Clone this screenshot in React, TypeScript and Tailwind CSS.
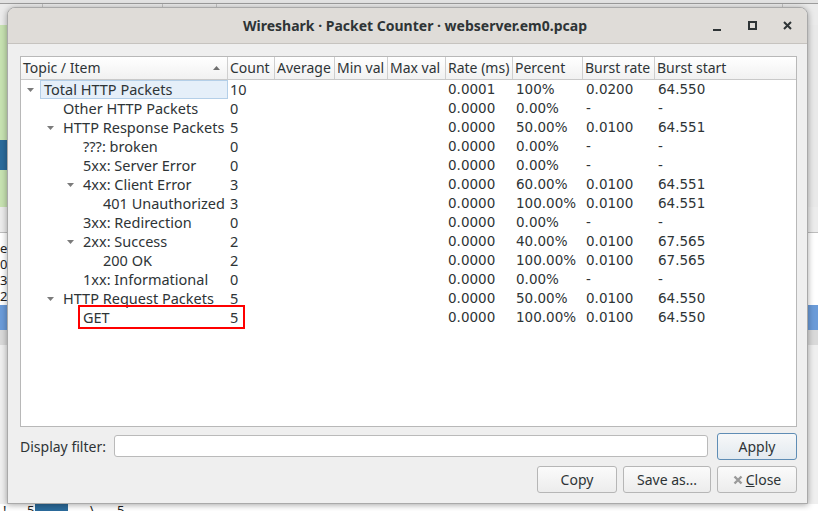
import React from 'react';

type Row = {
  label: string;
  level: number;
  expanded?: boolean;
  count: string;
  rate: string;
  percent: string;
  burstRate: string;
  burstStart: string;
};

const rows: Row[] = [
  { label: 'Total HTTP Packets', level: 0, expanded: true, count: '10', rate: '0.0001', percent: '100%', burstRate: '0.0200', burstStart: '64.550' },
  { label: 'Other HTTP Packets', level: 1, count: '0', rate: '0.0000', percent: '0.00%', burstRate: '-', burstStart: '-' },
  { label: 'HTTP Response Packets', level: 1, expanded: true, count: '5', rate: '0.0000', percent: '50.00%', burstRate: '0.0100', burstStart: '64.551' },
  { label: '???: broken', level: 2, count: '0', rate: '0.0000', percent: '0.00%', burstRate: '-', burstStart: '-' },
  { label: '5xx: Server Error', level: 2, count: '0', rate: '0.0000', percent: '0.00%', burstRate: '-', burstStart: '-' },
  { label: '4xx: Client Error', level: 2, expanded: true, count: '3', rate: '0.0000', percent: '60.00%', burstRate: '0.0100', burstStart: '64.551' },
  { label: '401 Unauthorized', level: 3, count: '3', rate: '0.0000', percent: '100.00%', burstRate: '0.0100', burstStart: '64.551' },
  { label: '3xx: Redirection', level: 2, count: '0', rate: '0.0000', percent: '0.00%', burstRate: '-', burstStart: '-' },
  { label: '2xx: Success', level: 2, expanded: true, count: '2', rate: '0.0000', percent: '40.00%', burstRate: '0.0100', burstStart: '67.565' },
  { label: '200 OK', level: 3, count: '2', rate: '0.0000', percent: '100.00%', burstRate: '0.0100', burstStart: '67.565' },
  { label: '1xx: Informational', level: 2, count: '0', rate: '0.0000', percent: '0.00%', burstRate: '-', burstStart: '-' },
  { label: 'HTTP Request Packets', level: 1, expanded: true, count: '5', rate: '0.0000', percent: '50.00%', burstRate: '0.0100', burstStart: '64.550' },
  { label: 'GET', level: 2, count: '5', rate: '0.0000', percent: '100.00%', burstRate: '0.0100', burstStart: '64.550' },
];

const cols = 'grid grid-cols-[207px_47px_60px_53px_58px_67px_70px_72px_1fr]';
const indent = ['pl-[22px]', 'pl-[42px]', 'pl-[62px]', 'pl-[82px]'];
const arrowPos = ['left-[6px]', 'left-[26px]', 'left-[46px]', 'left-[66px]'];

function Arrow({ level }: { level: number }) {
  return (
    <svg className={`absolute top-[8px] ${arrowPos[level]} h-[4px] w-[7px]`} viewBox="0 0 7 4">
      <polygon points="0,0 7,0 3.5,4" fill="#7b7b7b" />
    </svg>
  );
}

function Btn({ children, primary }: { children: React.ReactNode; primary?: boolean }) {
  return (
    <button
      className={`w-full h-[27px] rounded-[3px] border text-[14px] text-[#2e3436] flex items-center justify-center ${
        primary
          ? 'border-[#5f8db5] bg-gradient-to-b from-[#f7f8f9] to-[#e2e9ef]'
          : 'border-[#b6b6b6] bg-gradient-to-b from-[#fbfbfb] to-[#ececec]'
      }`}
    >
      {children}
    </button>
  );
}

export default function App() {
  return (
    <div className="relative w-[818px] h-[511px] overflow-hidden bg-[#efefef] font-['Noto_Sans',sans-serif]">
      {/* main window behind the dialog */}
      <div className="flex flex-col h-full">
        <div className="h-[4px] bg-[#e2e2e2] border-b border-[#9c9c9c]" />
        <div className="h-[21px] bg-[#ebebeb] flex">
          <div className="w-[43px] border-r border-[#c4c4c4]" />
          <div className="w-[120px] border-r border-[#c4c4c4]" />
          <div className="w-[54px] border-r border-[#c4c4c4]" />
          <div className="w-[566px] border-r border-[#c4c4c4]" />
        </div>
        <div className="h-[115px] flex">
          <div className="w-[40px] bg-[#c7e2b1]" />
          <div className="flex-1 bg-[#e9e9e9]" />
        </div>
        <div className="h-[30px] flex">
          <div className="w-[40px] bg-[#2b6b9b]" />
          <div className="flex-1 bg-[#e9e9e9]" />
        </div>
        <div className="h-[37px] flex">
          <div className="w-[40px] bg-[#c7e2b1]" />
          <div className="flex-1 bg-[#e9e9e9]" />
        </div>
        <div className="h-[26px] bg-[#ececec] border-b border-[#bdbdbd]" />
        <div className="h-[72px] bg-white flex flex-col pt-[7px] text-[13px] leading-[16px] text-[#222]">
          <span>ec</span>
          <span>0s</span>
          <span>3</span>
          <span>28</span>
        </div>
        <div className="h-[25px] bg-[#6b9bd8]" />
        <div className="h-[15px] bg-[#d9d9d9]" />
        <div className="flex-1 bg-[#efefef]" />
        <div className="h-[7px] bg-white flex items-start text-[13px] leading-[12px] text-[#222]">
          <span className="w-[27px] pl-[3px]">!</span>
          <span className="w-[8px]">5</span>
          <span className="w-[33px] h-full bg-[#2b6b9b]" />
          <span className="w-[49px] pl-[22px]">\</span>
          <span>5</span>
        </div>
      </div>

      {/* Packet Counter dialog */}
      <div className="absolute left-[7px] top-[7px] w-[801px] h-[497px] flex flex-col rounded-t-[8px] border border-[#a9a9a9] bg-[#efefef] shadow-[0_1px_6px_rgba(0,0,0,0.35)] overflow-hidden">
        <div className="h-[36px] shrink-0 bg-[#dfdcd8] border-b border-[#c6c3bf] flex items-center relative">
          <span className="flex-1 text-center pl-[15px] text-[14px] font-bold text-[#2e3436]">
            Wireshark · Packet Counter · webserver.em0.pcap
          </span>
          <div className="absolute right-0 top-0 h-full flex items-center">
            <span className="w-[8px] h-[2px] bg-[#2e3436] mt-[8px] mr-[27px]" />
            <span className="w-[9px] h-[9px] border-2 border-[#2e3436] mr-[26px]" />
            <svg className="w-[9px] h-[9px] mr-[15px]" viewBox="0 0 9 9">
              <path d="M1 1 L8 8 M8 1 L1 8" stroke="#2e3436" strokeWidth="2" />
            </svg>
          </div>
        </div>

        <div className="flex-1 flex flex-col px-[12px] pt-[12px] pr-[10px]">
          {/* tree view */}
          <div className="relative h-[371px] border border-[#b8b8b8] bg-white">
            <div className={`${cols} h-[23px] border-b border-[#c9c9c9] bg-gradient-to-b from-white to-[#f1f1f1] text-[14px] leading-[22px] text-[#2e3436]`}>
              <div className="relative pl-[2px] border-r border-[#cfcfcf]">
                Topic / Item
                <svg className="absolute right-[7px] top-[9px] w-[7px] h-[4px]" viewBox="0 0 7 4">
                  <polygon points="0,4 7,4 3.5,0" fill="#6f6f6f" />
                </svg>
              </div>
              <div className="pl-[2px] border-r border-[#cfcfcf]">Count</div>
              <div className="pl-[2px] border-r border-[#cfcfcf]">Average</div>
              <div className="pl-[2px] border-r border-[#cfcfcf]">Min val</div>
              <div className="pl-[2px] border-r border-[#cfcfcf]">Max val</div>
              <div className="pl-[2px] border-r border-[#cfcfcf]">Rate (ms)</div>
              <div className="pl-[2px] border-r border-[#cfcfcf]">Percent</div>
              <div className="pl-[2px] border-r border-[#cfcfcf]">Burst rate</div>
              <div className="pl-[2px]">Burst start</div>
            </div>

            {rows.map((r, i) => (
              <div key={i} className={`${cols} h-[19px] text-[#2e3436]`}>
                <div className={`relative ${indent[r.level]} text-[14.5px] leading-[19px] whitespace-nowrap`}>
                  {r.expanded && <Arrow level={r.level} />}
                  {i === 0 ? (
                    <span className="absolute left-[19px] top-0 w-[188px] h-[19px] pl-[3px] bg-[#e5eff9] border border-[#b4cfe8] leading-[17px]">
                      {r.label}
                    </span>
                  ) : (
                    r.label
                  )}
                </div>
                <div className="pl-[2px] text-[14.5px] leading-[19px]">{r.count}</div>
                <div />
                <div />
                <div />
                <div className="pl-[2px] font-['DejaVu_Sans',sans-serif] text-[13.5px] leading-[19px]">{r.rate}</div>
                <div className="pl-[3px] font-['DejaVu_Sans',sans-serif] text-[13.5px] leading-[19px]">{r.percent}</div>
                <div className="pl-[3px] font-['DejaVu_Sans',sans-serif] text-[13.5px] leading-[19px]">{r.burstRate}</div>
                <div className="pl-[3px] font-['DejaVu_Sans',sans-serif] text-[13.5px] leading-[19px]">{r.burstStart}</div>
              </div>
            ))}

            {/* annotation box */}
            <div className="absolute left-[57px] top-[248px] w-[167px] h-[24px] border-2 border-[#ff0000]" />
          </div>

          {/* display filter */}
          <div className="flex items-center mt-[6px] h-[26px]">
            <span className="w-[94px] text-[14px] text-[#2e3436]">Display filter:</span>
            <div className="w-[594px] h-[22px] bg-white border border-[#bababa] rounded-[3px]" />
            <div className="ml-[9px] w-[80px]">
              <Btn primary>Apply</Btn>
            </div>
          </div>

          <div className="flex justify-end gap-[6px] mt-[7px]">
            <div className="w-[80px]">
              <Btn>Copy</Btn>
            </div>
            <div className="w-[88px]">
              <Btn>Save as...</Btn>
            </div>
            <div className="w-[80px]">
              <Btn>
                <span className="flex items-center gap-[3px]">
                  <svg className="w-[10px] h-[10px]" viewBox="0 0 10 10">
                    <path d="M1.5 1.5 L8.5 8.5 M8.5 1.5 L1.5 8.5" stroke="#9a9a9a" strokeWidth="2.4" />
                  </svg>
                  <span>
                    <span className="underline">C</span>lose
                  </span>
                </span>
              </Btn>
            </div>
          </div>
        </div>
      </div>
    </div>
  );
}
